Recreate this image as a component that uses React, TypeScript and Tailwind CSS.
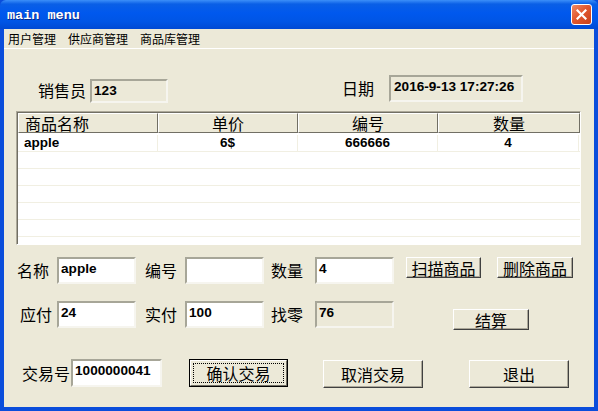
import type { ReactNode } from "react";

const cjk = "font-['Noto_Sans_CJK_SC','Liberation_Sans',sans-serif]";
const latin = "font-['Liberation_Sans','Noto_Sans_CJK_SC',sans-serif]";

function Label({ text, className = "" }: { text: string; className?: string }) {
  return (
    <span className={`${cjk} shrink-0 text-[16px] leading-[27px] text-black ${className}`}>
      {text}
    </span>
  );
}

function Field({
  value = "",
  disabled = false,
  className = "",
}: {
  value?: string;
  disabled?: boolean;
  className?: string;
}) {
  return (
    <div
      className={`${latin} shrink-0 border-2 border-t-[#a7a698] border-l-[#a7a698] border-b-[#f6f5ef] border-r-[#f6f5ef] pl-[2px] pt-[2px] text-[13.6px] font-bold leading-[16px] text-black ${
        disabled ? "bg-[#ece9d8]" : "bg-white"
      } ${className}`}
    >
      {value}
    </div>
  );
}

function Button({
  children,
  primary = false,
  className = "",
}: {
  children: ReactNode;
  primary?: boolean;
  className?: string;
}) {
  if (primary) {
    return (
      <div className={`shrink-0 border border-black bg-[#ece9d8] ${className}`}>
        <div className="h-full w-full border border-t-white border-l-white border-b-[#716f64] border-r-[#716f64] p-[2px]">
          <div
            className={`${cjk} flex h-full w-full items-center justify-center border border-dotted border-black text-[16px] leading-none text-black`}
          >
            {children}
          </div>
        </div>
      </div>
    );
  }
  return (
    <div
      className={`${cjk} flex shrink-0 items-center justify-center border border-t-white border-l-white border-b-[#404040] border-r-[#404040] bg-[#ece9d8] text-[16px] leading-none text-black shadow-[inset_-1px_-1px_0_#aca899] ${className}`}
    >
      {children}
    </div>
  );
}

const rows = [
  { name: "apple", price: "6$", code: "666666", qty: "4" },
  { name: "", price: "", code: "", qty: "" },
  { name: "", price: "", code: "", qty: "" },
  { name: "", price: "", code: "", qty: "" },
  { name: "", price: "", code: "", qty: "" },
  { name: "", price: "", code: "", qty: "" },
  { name: "", price: "", code: "", qty: "" },
];

function Grid() {
  return (
    <div className="ml-[12px] mt-[8px] h-[134px] w-[565px] overflow-hidden border border-t-[#aca899] border-l-[#aca899] border-b-white border-r-white bg-white shadow-[inset_1px_1px_0_#716f64]">
      <div className="ml-[1px] mt-[1px] flex h-[20px] bg-[#ece9d8]">
        {["商品名称", "单价", "编号", "数量"].map((h, i) => (
          <div
            key={h}
            className={`${cjk} flex h-full shrink-0 items-center border border-t-white border-l-white border-b-[#716f64] border-r-[#716f64] text-[16px] leading-none text-black ${
              i === 0 ? "w-[140px] justify-start pl-[6px]" : i === 3 ? "w-[142px] justify-center" : "w-[140px] justify-center"
            }`}
          >
            {h}
          </div>
        ))}
      </div>
      {rows.map((r, i) => (
        <div
          key={i}
          className={`ml-[1px] flex items-center border-b border-[#f1efe2] ${latin} text-[13.5px] font-bold text-black ${
            i === 0 ? "h-[19px] pt-[1px]" : "h-[17px]"
          }`}
        >
          <div className="w-[140px] shrink-0 border-r border-[#f1efe2] pl-[6px] leading-[16px]">{r.name}</div>
          <div className="w-[140px] shrink-0 border-r border-[#f1efe2] text-center leading-[16px]">{r.price}</div>
          <div className="w-[140px] shrink-0 border-r border-[#f1efe2] text-center leading-[16px]">{r.code}</div>
          <div className="w-[141px] shrink-0 border-r border-[#f1efe2] text-center leading-[16px]">{r.qty}</div>
        </div>
      ))}
    </div>
  );
}

export default function App() {
  return (
    <div className="flex h-[411px] w-[598px] flex-col overflow-hidden bg-[#0a4ddb]">
      {/* title bar */}
      <div className="flex h-[29px] shrink-0 items-center justify-between rounded-t-[6px] bg-[linear-gradient(to_bottom,#3c8ff9_0%,#0a5fe6_14%,#0058ee_45%,#0055e5_75%,#0049d3_100%)] pl-[7px] pr-[6px]">
        <span className="pt-[3px] font-['Liberation_Mono',monospace] text-[13.5px] font-bold leading-none text-white [text-shadow:1px_1px_0_#0a2a8a]">
          main menu
        </span>
        <div className="flex h-[21px] w-[21px] items-center justify-center rounded-[3px] border border-white bg-[linear-gradient(135deg,#f08a66_0%,#e2582f_45%,#c8401a_100%)]">
          <svg width="11" height="11" viewBox="0 0 11 11">
            <path d="M1.5 1.5 L9.5 9.5 M9.5 1.5 L1.5 9.5" stroke="white" strokeWidth="2.2" strokeLinecap="square" />
          </svg>
        </div>
      </div>

      {/* client area */}
      <div className="mx-[4px] mb-[4px] flex flex-1 flex-col bg-[#ece9d8]">
        <div className={`${cjk} flex h-[20px] shrink-0 items-center gap-[12px] border-b border-white pl-[4px] text-[12px] leading-none text-black`}>
          <span>用户管理</span>
          <span>供应商管理</span>
          <span>商品库管理</span>
        </div>

        {/* seller / date */}
        <div className="mt-[26px] flex h-[28px] items-start">
          <Label text="销售员" className="ml-[34px] leading-[30px]" />
          <Field value="123" disabled className="ml-[4px] mt-[4px] h-[24px] w-[78px]" />
          <Label text="日期" className="ml-[174px] leading-[26px]" />
          <Field value="2016-9-13 17:27:26" disabled className="ml-[15px] h-[27px] w-[134px] pl-[3px]" />
        </div>

        <Grid />

        {/* name / code / qty */}
        <div className="mt-[12px] flex h-[27px] items-start">
          <Label text="名称" className="ml-[13px]" />
          <Field value="apple" className="ml-[8px] h-[27px] w-[79px]" />
          <Label text="编号" className="ml-[9px]" />
          <Field className="ml-[8px] h-[27px] w-[79px]" />
          <Label text="数量" className="ml-[7px]" />
          <Field value="4" className="ml-[12px] h-[27px] w-[79px]" />
          <Button className="ml-[12px] h-[21px] w-[75px]">扫描商品</Button>
          <Button className="ml-[16px] h-[21px] w-[76px]">删除商品</Button>
        </div>

        {/* payable / paid / change */}
        <div className="mt-[17px] flex h-[29px] items-start">
          <Label text="应付" className="ml-[16px]" />
          <Field value="24" className="ml-[5px] h-[27px] w-[79px]" />
          <Label text="实付" className="ml-[9px]" />
          <Field value="100" className="ml-[8px] h-[27px] w-[79px]" />
          <Label text="找零" className="ml-[7px]" />
          <Field value="76" disabled className="ml-[12px] h-[27px] w-[79px]" />
          <Button className="ml-[59px] mt-[8px] h-[21px] w-[76px]">结算</Button>
        </div>

        {/* transaction */}
        <div className="mt-[29px] flex h-[29px] items-start">
          <Label text="交易号" className="ml-[18px] leading-[28px]" />
          <Field value="1000000041" className="ml-[1px] h-[28px] w-[91px]" />
          <Button primary className="ml-[27px] h-[28px] w-[99px]">确认交易</Button>
          <Button className="ml-[35px] mt-[1px] h-[28px] w-[100px]">取消交易</Button>
          <Button className="ml-[46px] mt-[1px] h-[28px] w-[100px]">退出</Button>
        </div>
      </div>
    </div>
  );
}
